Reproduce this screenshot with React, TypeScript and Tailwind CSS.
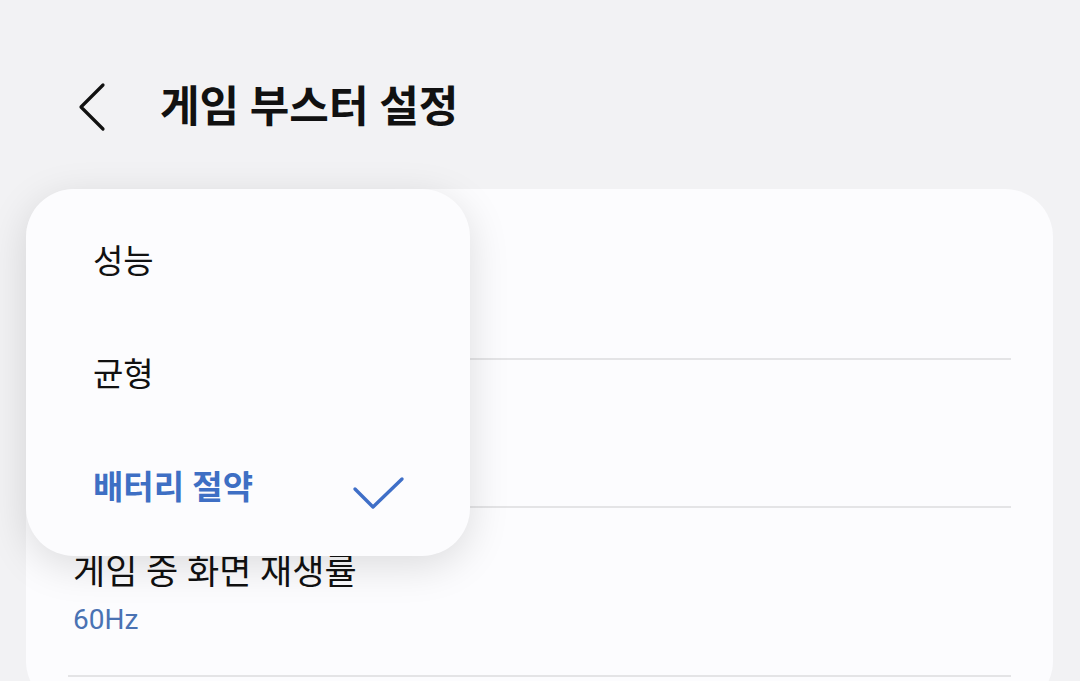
import { Fragment } from "react"

const font = { fontFamily: '"Roboto", "Noto Sans CJK KR", sans-serif' }

const options = [
  { label: "성능", selected: false },
  { label: "균형", selected: false },
  { label: "배터리 절약", selected: true },
]

function BackIcon() {
  return (
    <svg width="32" height="50" viewBox="0 0 32 50" fill="none">
      <path d="M25 3 L3 25 L25 47" stroke="#111" strokeWidth="3.2" strokeLinecap="round" strokeLinejoin="round" />
    </svg>
  )
}

function CheckIcon() {
  return (
    <svg width="54" height="36" viewBox="0 0 54 36" fill="none">
      <path d="M3 13 L21 31 L50 3" stroke="#3f6fc8" strokeWidth="3.4" strokeLinecap="round" strokeLinejoin="round" />
    </svg>
  )
}

export default function App() {
  return (
    <div className="relative min-h-screen h-[681px] overflow-hidden bg-[#f2f2f4]" style={font}>
      <header className="flex items-center h-[96px] mt-[59px] mb-[34px] pl-[78px]">
        <BackIcon />
        <h1 className="ml-[50px] text-[43px] font-bold text-[#111]">게임 부스터 설정</h1>
      </header>

      <div className="ml-[26px] mr-[27px] rounded-[48px] bg-[#fcfcfe] h-[520px]">
        <div className="h-[169px]" />
        <div className="mx-[42px] h-[2px] bg-[#e4e4e6]" />
        <div className="h-[146px]" />
        <div className="mx-[42px] h-[2px] bg-[#e4e4e6]" />
        <div className="h-[167px] px-[47px] pt-[43px]">
          <div className="text-[35px] leading-[44px] text-[#111]">게임 중 화면 재생률</div>
          <div className="mt-[6px] text-[28px] leading-[38px] text-[#4a72b3]">60Hz</div>
        </div>
        <div className="mx-[42px] h-[2px] bg-[#e4e4e6]" />
      </div>

      <div className="absolute left-[26px] top-[189px] w-[444px] rounded-[48px] bg-[#fcfcfe] pt-[16px] pb-[12px] shadow-[0_10px_40px_rgba(0,0,0,0.13)]">
        {options.map((o) => (
          <Fragment key={o.label}>
            <div className="flex items-center justify-between h-[113px] pl-[67px] pr-[64px]">
              <span
                className={
                  o.selected
                    ? "text-[33px] font-bold text-[#3e6fc4]"
                    : "text-[33px] text-[#111]"
                }
              >
                {o.label}
              </span>
              {o.selected && (
                <span className="mt-[12px]">
                  <CheckIcon />
                </span>
              )}
            </div>
          </Fragment>
        ))}
      </div>
    </div>
  )
}
